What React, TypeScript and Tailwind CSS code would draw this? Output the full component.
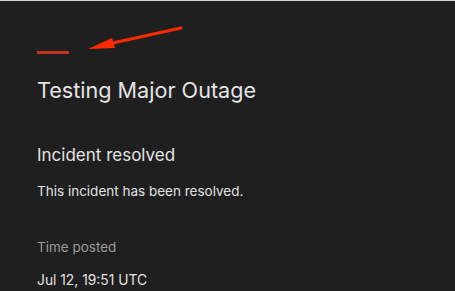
export default function App() {
  return (
    <div className="relative h-[291px] w-[455px] overflow-hidden border-t border-[#d4d4d4] bg-[#1f1f1f] pl-[37px] font-['Inter',sans-serif] antialiased">
      <div className="mt-[50px] h-[3px] w-[32px] bg-[#c8321d]" />
      <h1 className="mt-[22px] text-[21.6px] leading-[28px] text-[#e4e4e4]">Testing Major Outage</h1>
      <h2 className="mt-[39px] text-[17px] leading-[24px] text-[#e4e4e4]">Incident resolved</h2>
      <p className="mt-[14px] text-[13.5px] leading-[20px] text-[#e2e2e2]">This incident has been resolved.</p>
      <p className="mt-[36px] text-[13.5px] leading-[20px] text-[#9c9c9c]">Time posted</p>
      <p className="mt-[13px] text-[13.8px] leading-[20px] text-[#e2e2e2]">Jul 12, 19:51 UTC</p>

      {/* annotation arrow */}
      <svg className="absolute left-0 top-0" width="455" height="291" viewBox="0 0 455 291">
        <line x1="181" y1="27" x2="108" y2="43" stroke="#ff2a00" strokeWidth="3" strokeLinecap="round" />
        <polygon points="88,48 112,37 115,47" fill="#ff2a00" />
      </svg>
    </div>
  );
}
